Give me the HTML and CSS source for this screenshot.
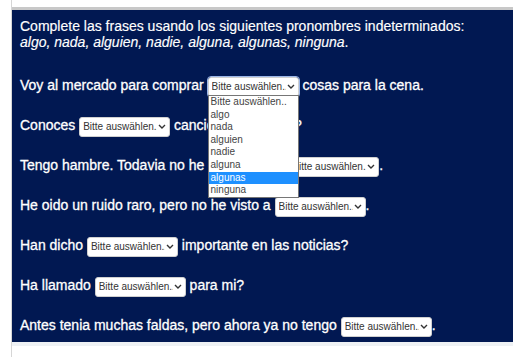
FILE: index.html
```html
<!DOCTYPE html>
<html lang="es">
<head>
    <meta charset="UTF-8">
    <meta name="viewport" content="width=device-width, initial-scale=1.0">
    <title>Pronombres indeterminados</title>

    <link rel="stylesheet" href="styles.css">
</head>
<body>

    <div class="page">
        <!-- ejercicio -->
        <div class="exercise">
            <p class="intro">
                Complete las frases usando los siguientes pronombres indeterminados:<br>
                <em>algo, nada, alguien, nadie, alguna, algunas, ninguna</em>.
            </p>

            <p class="q">Voy al mercado para comprar
                <span class="pick">
                    <select class="open">
                        <option>Bitte auswählen..</option>
                    </select><svg class="chev" width="8" height="5" viewBox="0 0 8 5"><path d="M1 1l3 3 3-3" fill="none" stroke="#333" stroke-width="1.4"/></svg>
                    <!-- lista abierta -->
                    <span class="options">
                        <span>Bitte auswählen..</span>
                        <span>algo</span>
                        <span>nada</span>
                        <span>alguien</span>
                        <span>nadie</span>
                        <span>alguna</span>
                        <span class="hover">algunas</span>
                        <span>ninguna</span>
                    </span>
                </span>
                cosas para la cena.</p>

            <p class="q">Conoces <span class="pick"><select><option>Bitte auswählen..</option></select><svg class="chev" width="8" height="5" viewBox="0 0 8 5"><path d="M1 1l3 3 3-3" fill="none" stroke="#333" stroke-width="1.4"/></svg></span> canciones famosas?</p>

            <p class="q">Tengo hambre. Todavia no he desayunado <span class="pick"><select><option>Bitte auswählen..</option></select><svg class="chev" width="8" height="5" viewBox="0 0 8 5"><path d="M1 1l3 3 3-3" fill="none" stroke="#333" stroke-width="1.4"/></svg></span>.</p>

            <p class="q">He oido un ruido raro, pero no he visto a <span class="pick"><select><option>Bitte auswählen..</option></select><svg class="chev" width="8" height="5" viewBox="0 0 8 5"><path d="M1 1l3 3 3-3" fill="none" stroke="#333" stroke-width="1.4"/></svg></span>.</p>

            <p class="q">Han dicho <span class="pick"><select><option>Bitte auswählen..</option></select><svg class="chev" width="8" height="5" viewBox="0 0 8 5"><path d="M1 1l3 3 3-3" fill="none" stroke="#333" stroke-width="1.4"/></svg></span> importante en las noticias?</p>

            <p class="q">Ha llamado <span class="pick"><select><option>Bitte auswählen..</option></select><svg class="chev" width="8" height="5" viewBox="0 0 8 5"><path d="M1 1l3 3 3-3" fill="none" stroke="#333" stroke-width="1.4"/></svg></span> para mi?</p>

            <p class="q">Antes tenia muchas faldas, pero ahora ya no tengo <span class="pick"><select><option>Bitte auswählen..</option></select><svg class="chev" width="8" height="5" viewBox="0 0 8 5"><path d="M1 1l3 3 3-3" fill="none" stroke="#333" stroke-width="1.4"/></svg></span>.</p>
        </div>
        <div class="under"></div>
    </div>

</body>
</html>
```

FILE: styles.css
```css
body {
    margin: 0;
    background: #fff;
    font-family: "Liberation Sans", Arial, sans-serif;
}

/* marco */
.page {
    width: 501px;
    height: 350px;
    margin-left: 11px;
    padding-top: 7px;
    border-left: 1px solid #d6d6d6;
}

.exercise {
    display: flex;
    flex-direction: column;
    gap: 20px;
    border-top: 3px solid #c8c8c8;
    background-color: #011852;
    color: #fff;
    font-size: 14px;
    padding: 8px 8px 7px 8px;
}

.under {
    height: 4px;
    background-color: #eef1f4;
}

.intro {
    margin: 0 0 5px 0;
    line-height: 16px;
    -webkit-text-stroke: 0.15px #fff;
}

.q {
    margin: 0;
    height: 20px;
    line-height: 20px;
    -webkit-text-stroke: 0.3px #fff;
}

/* selects */
.pick {
    position: relative;
    display: inline-block;
    -webkit-text-stroke: 0;
}

select {
    appearance: none;
    -webkit-appearance: none;
    width: 91px;
    height: 20px;
    padding: 0 12px 0 3px;
    font-family: "Liberation Sans", Arial, sans-serif;
    font-size: 10px;
    color: #333;
    background-color: #fff;
    border: 1px solid #d0d0d0;
    border-radius: 3px;
}

select.open {
    outline: 1px solid #9db7e8;
}

.chev {
    margin-left: -12px;
    margin-right: 4px;
    vertical-align: 1px;
    pointer-events: none;
}

.options {
    position: absolute;
    top: 20px;
    left: 0;
    z-index: 2;
    display: flex;
    flex-direction: column;
    width: 89px;
    background-color: #fff;
    border: 1px solid #767676;
    font-size: 10px;
    line-height: 12.6px;
    color: #444;
}

.options span {
    padding-left: 2px;
}

.options .hover {
    background-color: #1e90ff;
    color: #fff;
}
```
